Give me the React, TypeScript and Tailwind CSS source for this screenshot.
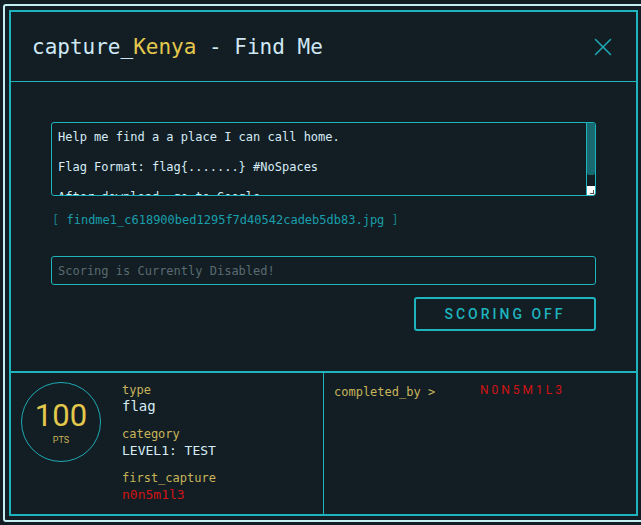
import { X } from 'lucide-react';

const mono = { fontFamily: '"DejaVu Sans Mono", "Liberation Mono", monospace' };

export default function App() {
  return (
    <div className="w-[641px] h-[525px] overflow-hidden bg-[#121e24] pt-[4px] pl-[3px]">
      <div className="w-[680px] h-[518px] border-2 border-[#c6eef2] rounded-tl-[3px] rounded-bl-[3px] pt-[4px] pl-[4px]">
        <div className="w-[629px] h-[506px] border-2 border-[#1fb3bd] flex flex-col" style={mono}>
          {/* header */}
          <div className="h-[70px] shrink-0 border-b border-[#1fb3bd] flex items-center justify-between pl-[21px] pr-[18px]">
            <h1 className="text-[21px] text-[#cfe8f4] pt-[2px]">
              capture_<span className="text-[#e3c84c]">Kenya</span> - Find Me
            </h1>
            <X size={30} strokeWidth={1.2} className="text-[#1fa9b3]" />
          </div>

          {/* body */}
          <div className="h-[291px] shrink-0 border-b-2 border-[#1fb3bd] px-[40px] pt-[40px] flex flex-col">
            <div className="relative h-[74px] border border-[#1fb3bd] rounded-[3px] overflow-hidden">
              <div className="pl-[6px] pr-[14px] pt-[7px] text-[12px] leading-[15px] text-[#d6ebf5] whitespace-pre">
                {'Help me find a a place I can call home.\n\nFlag Format: flag{.......} #NoSpaces\n\nAfter download, go to Google'}
              </div>
              <div className="absolute right-0 top-0 bottom-0 w-[9px] border-l border-[#1fb3bd] flex flex-col">
                <div className="h-[52px] bg-[#166a70] rounded-b-[2px]" />
                <div className="flex-1" />
                <div className="h-[9px] bg-white flex items-end justify-end">
                  <div className="w-[4px] h-[4px] border-r border-b border-[#555] mr-[1px] mb-[1px]" />
                </div>
              </div>
            </div>

            <div className="mt-[17px] text-[12px] leading-[15px] pl-[1px]">
              <span className="text-[#157f86]">[ </span>
              <span className="text-[#1a9eab]">findme1_c618900bed1295f7d40542cadeb5db83.jpg</span>
              <span className="text-[#157f86]"> ]</span>
            </div>

            <div className="mt-[28px] h-[29px] border border-[#1fb3bd] rounded-[3px] flex items-center pl-[6px] text-[12px] text-[#5a6a70]">
              Scoring is Currently Disabled!
            </div>

            <div className="flex justify-end mt-[12px]">
              <div
                className="w-[182px] h-[34px] border-2 border-[#1fb3bd] rounded-[3px] flex items-center justify-center text-[14px] font-medium tracking-[3px] text-[#1fb3bd]"
                style={{ fontFamily: 'Roboto, "Liberation Sans", sans-serif' }}
              >
                SCORING OFF
              </div>
            </div>
          </div>

          {/* footer */}
          <div className="flex flex-1">
            <div className="w-[313px] border-r border-[#1fb3bd] flex pl-[10px] pt-[9px]">
              <div className="w-[80px] h-[80px] rounded-full border border-[#1fa9b3] flex flex-col items-center justify-center shrink-0">
                <div
                  className="text-[31px] leading-[30px] text-[#e3c84c] mt-[4px]"
                  style={{ fontFamily: 'Roboto, "Liberation Sans", sans-serif', fontWeight: 400 }}
                >
                  100
                </div>
                <div className="text-[9px] text-[#c8b45a] mt-[3px]" style={{ fontFamily: 'Roboto, sans-serif' }}>PTS</div>
              </div>
              <div className="ml-[21px] pt-[1px] flex flex-col gap-[11px]">
                <div>
                  <div className="text-[12px] leading-[14px] text-[#c8b45a]">type</div>
                  <div className="text-[14px] leading-[19px] text-[#d6ebf5]">flag</div>
                </div>
                <div>
                  <div className="text-[12px] leading-[14px] text-[#c8b45a]">category</div>
                  <div className="text-[13px] leading-[19px] text-[#d6ebf5]">LEVEL1: TEST</div>
                </div>
                <div>
                  <div className="text-[12px] leading-[14px] text-[#c8b45a]">first_capture</div>
                  <div className="text-[13px] leading-[19px] text-[#d11414]">n0n5m1l3</div>
                </div>
              </div>
            </div>
            <div className="flex-1 flex items-start pl-[10px] pt-[12px]">
              <div className="text-[12px] leading-[14px] text-[#c8b45a] w-[146px]">completed_by &gt;</div>
              <div
                className="text-[12px] leading-[14px] tracking-[3px] text-[#d11414] -mt-[2px]"
                style={{ fontFamily: 'Roboto, "Liberation Sans", sans-serif' }}
              >
                N0N5M1L3
              </div>
            </div>
          </div>
        </div>
      </div>
    </div>
  );
}
